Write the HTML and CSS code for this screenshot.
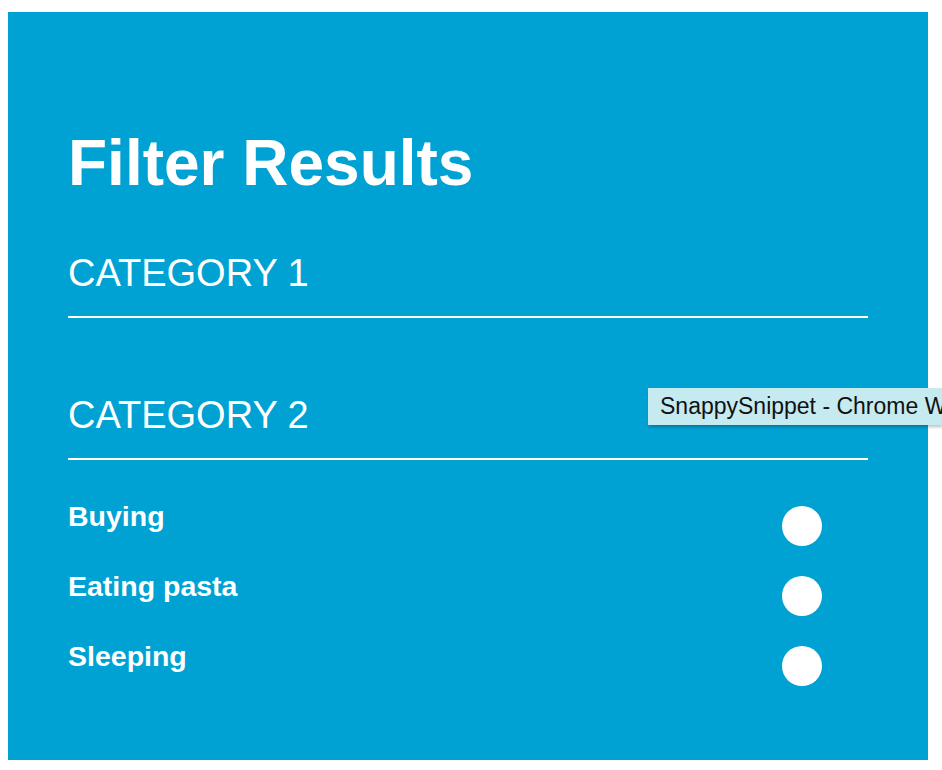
FILE: index.html
```html
<!DOCTYPE html>
<html lang="en">
<head>
<meta charset="utf-8">
<title>Filter Results</title>
<link rel="stylesheet" href="styles.css">
</head>
<body>
<section class="panel">
  <h1 class="title">Filter Results</h1>
  <h2 class="category">CATEGORY 1</h2>
  <h2 class="category category-second">CATEGORY 2</h2>
  <ul class="options">
    <li class="option"><span class="option-label">Buying</span><span class="toggle"></span></li>
    <li class="option"><span class="option-label">Eating pasta</span><span class="toggle"></span></li>
    <li class="option"><span class="option-label">Sleeping</span><span class="toggle"></span></li>
  </ul>
</section>
<div class="tooltip">SnappySnippet - Chrome Web Store</div>
</body>
</html>
```
FILE: styles.css
```css
html, body {
  overflow: hidden;
}
body {
  margin: 0;
  padding: 12px 0 0 8px;
  background: #ffffff;
  font-family: "Liberation Sans", Arial, Helvetica, sans-serif;
  color: #ffffff;
}
.panel {
  box-sizing: border-box;
  width: 920px;
  height: 748px;
  padding: 119px 60px 0 60px;
  background: #00a2d4;
}
.title {
  margin: 0;
  font-size: 64px;
  line-height: 64px;
  font-weight: bold;
}
.category {
  margin: 59px 0 0 0;
  padding-bottom: 24px;
  border-bottom: 2px solid #ffffff;
  font-size: 38px;
  line-height: 38px;
  font-weight: normal;
}
.category-second {
  margin-top: 78px;
}
.options {
  list-style: none;
  margin: 42px 0 0 0;
  padding: 0;
  display: flex;
  flex-direction: column;
  gap: 26px;
}
.option {
  display: flex;
  justify-content: space-between;
  align-items: flex-start;
  height: 44px;
}
.option-label {
  font-size: 28.5px;
  line-height: 28px;
  font-weight: bold;
}
.toggle {
  width: 40px;
  height: 40px;
  margin-top: 4px;
  margin-right: 46px;
  border-radius: 50%;
  background: #ffffff;
}
.tooltip {
  position: absolute;
  left: 648px;
  top: 388px;
  width: 294px;
  height: 37px;
  box-sizing: border-box;
  padding-left: 12px;
  overflow: hidden;
  background: #c5eaef;
  color: #111111;
  font-size: 23px;
  line-height: 37px;
  white-space: nowrap;
  box-shadow: 1px 2px 3px rgba(0, 0, 0, 0.25);
}
```
